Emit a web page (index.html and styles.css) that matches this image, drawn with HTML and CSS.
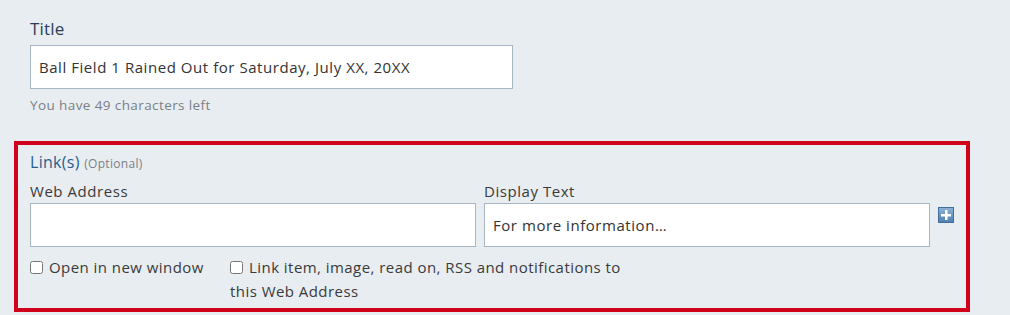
FILE: index.html
```html
<!DOCTYPE html>
<html>
<head>
<meta charset="utf-8">
<link rel="stylesheet" href="styles.css">
</head>
<body>
<div class="page">
  <div class="title-field">
    <label class="title-label">Title</label>
    <div class="input title-input">Ball Field 1 Rained Out for Saturday, July XX, 20XX</div>
    <div class="hint">You have 49 characters left</div>
  </div>

  <fieldset class="links">
    <div class="links-head">Link(s) <span class="optional">(Optional)</span></div>
    <div class="link-row">
      <div class="col">
        <div class="field-label">Web Address</div>
        <div class="input"></div>
      </div>
      <div class="col">
        <div class="field-label">Display Text</div>
        <div class="input">For more information…</div>
      </div>
      <svg class="add" width="16" height="16" viewBox="0 0 16 16">
        <defs>
          <linearGradient id="g" x1="0" y1="0" x2="0" y2="1">
            <stop offset="0" stop-color="#8fb3d6"/>
            <stop offset="1" stop-color="#4d7fb0"/>
          </linearGradient>
        </defs>
        <rect x="0.5" y="0.5" width="15" height="15" fill="url(#g)" stroke="#3f6e9c"/>
        <rect x="7" y="3" width="2.5" height="10" fill="#fff"/>
        <rect x="3" y="7" width="10" height="2.5" fill="#fff"/>
      </svg>
    </div>
    <div class="checks">
      <label class="check first"><input type="checkbox">Open in new window</label>
      <label class="check second"><input type="checkbox">Link item, image, read on, RSS and notifications to this Web Address</label>
    </div>
  </fieldset>
</div>
</body>
</html>
```

FILE: styles.css
```css
* { box-sizing: border-box; }
html, body {
  margin: 0;
  padding: 0;
  background: #e8edf1;
  font-family: "Open Sans", Lato, sans-serif;
  color: #3a3a3a;
}
.page {
  width: 1010px;
  height: 315px;
  padding: 17px 0 0 0;
}
.title-field {
  padding-left: 30px;
}
.title-label {
  display: block;
  font-size: 17px;
  line-height: 24px;
  color: #2c3b58;
  margin-bottom: 4px;
  letter-spacing: 0.2px;
}
.input {
  background: #fff;
  border: 1px solid #a9b6c4;
  height: 44px;
  padding: 0 8px;
  font-size: 15px;
  line-height: 42px;
  color: #333;
  white-space: nowrap;
  overflow: hidden;
  letter-spacing: 0.55px;
}
.title-input {
  width: 483px;
}
.hint {
  margin-top: 6px;
  font-size: 13.5px;
  line-height: 20px;
  color: #7a7f86;
  letter-spacing: 0.4px;
}
.links {
  margin: 26px 0 0 14px;
  width: 956px;
  height: 171px;
  border: 4px solid #d0021b;
  padding: 6px 12px 0 12px;
  min-width: 0;
}
.links-head {
  font-size: 16px;
  line-height: 22px;
  color: #2a5d8f;
  letter-spacing: 0.3px;
}
.optional {
  font-size: 12px;
  color: #7a7f86;
  letter-spacing: 0.3px;
}
.link-row {
  display: flex;
  align-items: flex-start;
  gap: 8px;
  margin-top: 6px;
}
.col {
  width: 446px;
}
.field-label {
  font-size: 15px;
  line-height: 20px;
  color: #3a3a3a;
  margin-bottom: 2px;
  letter-spacing: 0.55px;
}
.add {
  margin-top: 26px;
  display: block;
}
.checks {
  display: flex;
  gap: 24px;
  margin-top: 8px;
  font-size: 15px;
  line-height: 24px;
  color: #3a3a3a;
  letter-spacing: 0.45px;
}
.first {
  width: 176px;
}
.check input {
  margin: 0 6px 0 0;
  width: 13px;
  height: 13px;
  vertical-align: -1px;
}
.second {
  width: 410px;
}
```
